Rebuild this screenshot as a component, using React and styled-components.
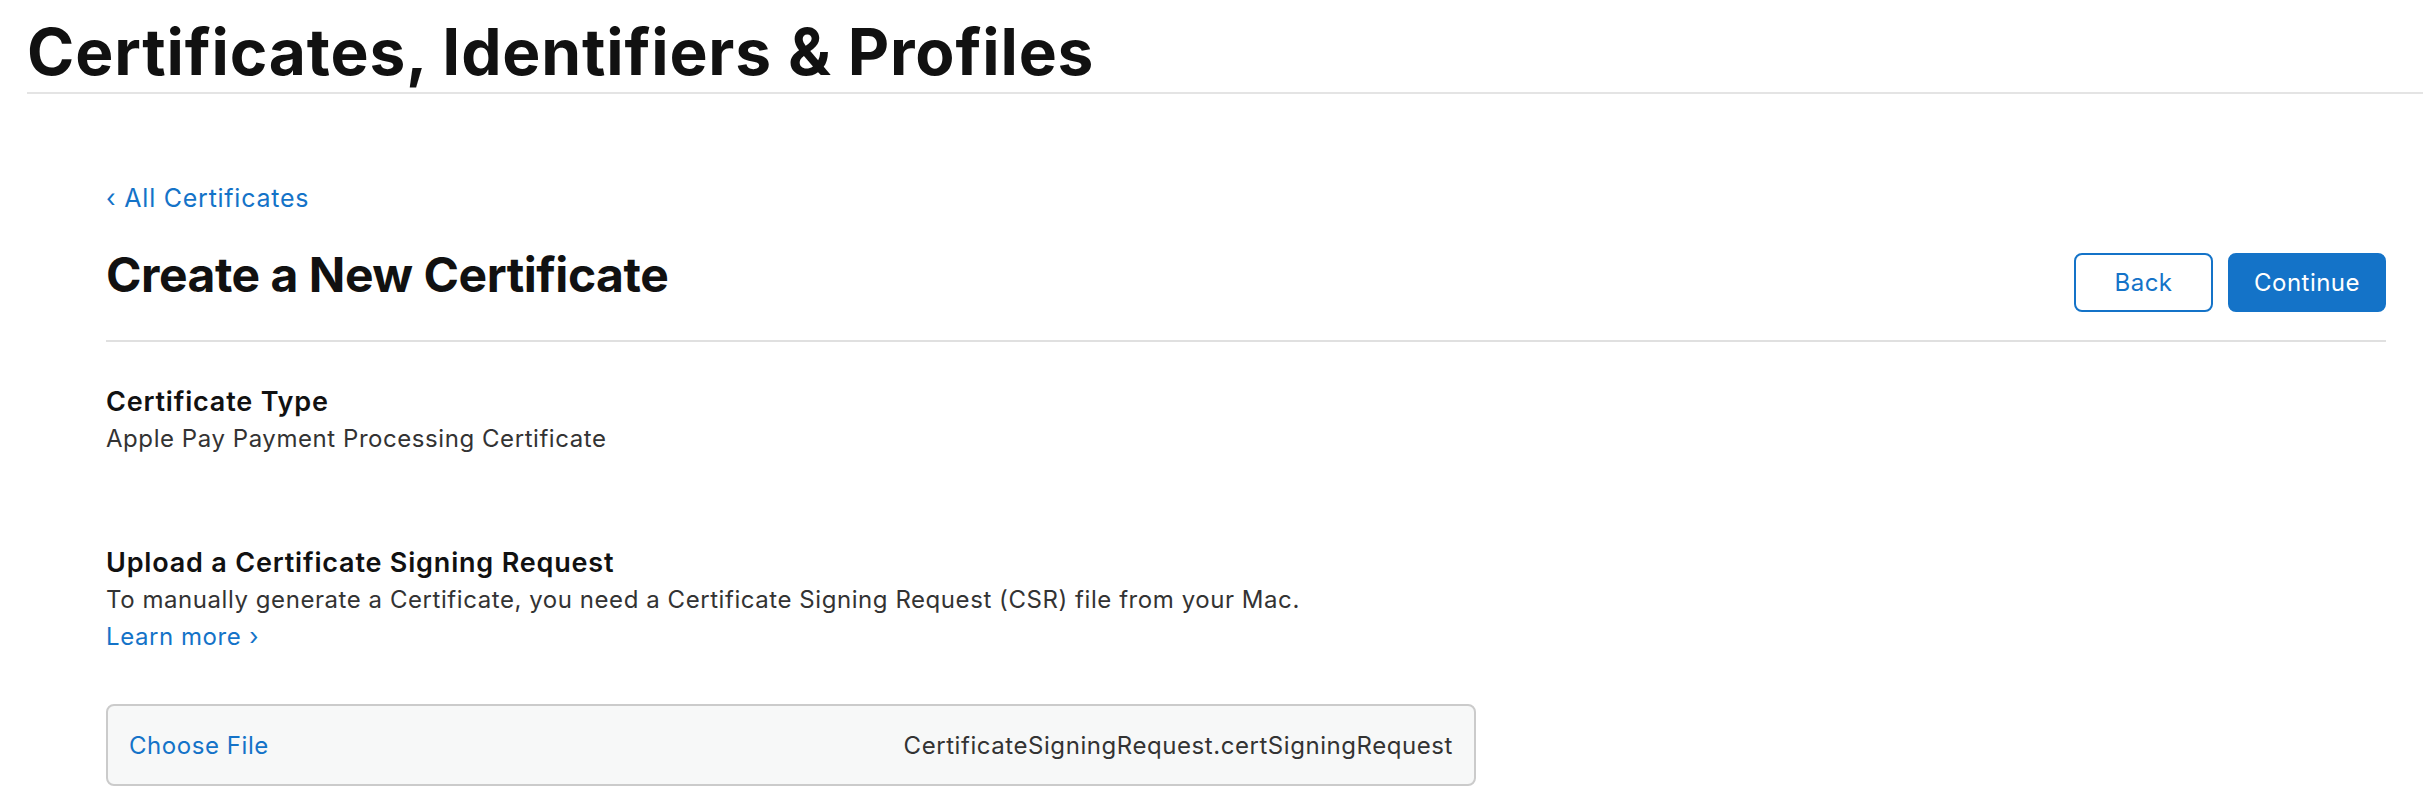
import React from 'react';
import styled, { createGlobalStyle } from 'styled-components';

const GlobalStyle = createGlobalStyle`
	body {
		margin: 0;
		background: #fff;
		font-family: Inter, 'Noto Sans', sans-serif;
		color: #333;
	}
`;

const BLUE = '#1473c8';

function App() {
	return (
		<Page>
			<GlobalStyle />
			<TopBar>
				<TopTitle>Certificates, Identifiers &amp; Profiles</TopTitle>
			</TopBar>

			<Content>
				<Breadcrumb href="#">
					<Chevron>‹</Chevron>All Certificates
				</Breadcrumb>

				<HeaderRow>
					<PageTitle>Create a New Certificate</PageTitle>
					<Actions>
						<Button $variant="outline">Back</Button>
						<Button $variant="primary">Continue</Button>
					</Actions>
				</HeaderRow>

				<Section>
					<SectionTitle>Certificate Type</SectionTitle>
					<SectionText>Apple Pay Payment Processing Certificate</SectionText>
				</Section>

				<Section $gap={87}>
					<SectionTitle>Upload a Certificate Signing Request</SectionTitle>
					<SectionText>
						To manually generate a Certificate, you need a Certificate Signing
						Request (CSR) file from your Mac.
					</SectionText>
					<Link href="#">
						Learn more<Chevron $after>›</Chevron>
					</Link>
				</Section>

				<FileBox>
					<ChooseFile>Choose File</ChooseFile>
					<FileName>CertificateSigningRequest.certSigningRequest</FileName>
				</FileBox>
			</Content>
		</Page>
	);
}

export default App;

const Page = styled.div`
	padding-top: 12px;
	min-height: 811px;
	box-sizing: border-box;
`;

const TopBar = styled.header`
	margin-left: 27px;
	border-bottom: 2px solid #e4e4e4;
`;

const TopTitle = styled.h1`
	margin: 0;
	font-size: 64px;
	line-height: 80px;
	font-weight: 700;
	letter-spacing: 0.013em;
	color: #111;
`;

const Content = styled.main`
	margin-left: 106px;
	width: 2280px;
	padding-top: 89px;
	letter-spacing: 0.035em;
`;

const Breadcrumb = styled.a`
	display: inline-block;
	font-size: 25px;
	line-height: 30px;
	letter-spacing: 0.03em;
	color: ${BLUE};
	text-decoration: none;
`;

const Chevron = styled.span`
	display: inline-block;
	margin: ${(p) => (p.$after ? '0 0 0 8px' : '0 8px 0 0')};
`;

const HeaderRow = styled.div`
	display: flex;
	justify-content: space-between;
	align-items: flex-start;
	margin-top: 32px;
	padding-bottom: 28px;
	border-bottom: 2px solid #e0e0e0;
`;

const PageTitle = styled.h2`
	margin: 0;
	font-size: 48px;
	line-height: 59px;
	font-weight: 700;
	letter-spacing: -0.01em;
	color: #111;
`;

const Actions = styled.div`
	display: flex;
	gap: 15px;
	margin-top: 8px;
`;

const Button = styled.button`
	box-sizing: border-box;
	height: 59px;
	min-width: 139px;
	padding: 0 24px;
	border-radius: 8px;
	font-family: inherit;
	font-size: 24px;
	font-weight: 400;
	letter-spacing: 0.02em;
	cursor: pointer;
	border: 2px solid ${BLUE};
	color: ${(p) => (p.$variant === 'primary' ? '#fff' : BLUE)};
	background: ${(p) => (p.$variant === 'primary' ? BLUE : '#fff')};
`;

const Section = styled.section`
	display: flex;
	flex-direction: column;
	align-items: flex-start;
	margin-top: ${(p) => p.$gap ?? 41}px;
`;

const SectionTitle = styled.h3`
	margin: 0;
	font-size: 27px;
	line-height: 37px;
	font-weight: 600;
	letter-spacing: 0.03em;
	color: #111;
`;

const SectionText = styled.p`
	margin: 0;
	font-size: 24px;
	line-height: 37px;
	color: #333;
`;

const Link = styled.a`
	font-size: 24px;
	line-height: 37px;
	color: ${BLUE};
	text-decoration: none;
`;

const FileBox = styled.div`
	box-sizing: border-box;
	display: flex;
	justify-content: space-between;
	align-items: center;
	width: 1370px;
	height: 82px;
	margin-top: 49px;
	padding: 0 21px;
	background: #f7f8f8;
	border: 2px solid #cbcbcb;
	border-radius: 8px;
	font-size: 24px;
`;

const ChooseFile = styled.span`
	color: ${BLUE};
	cursor: pointer;
`;

const FileName = styled.span`
	color: #333;
`;
